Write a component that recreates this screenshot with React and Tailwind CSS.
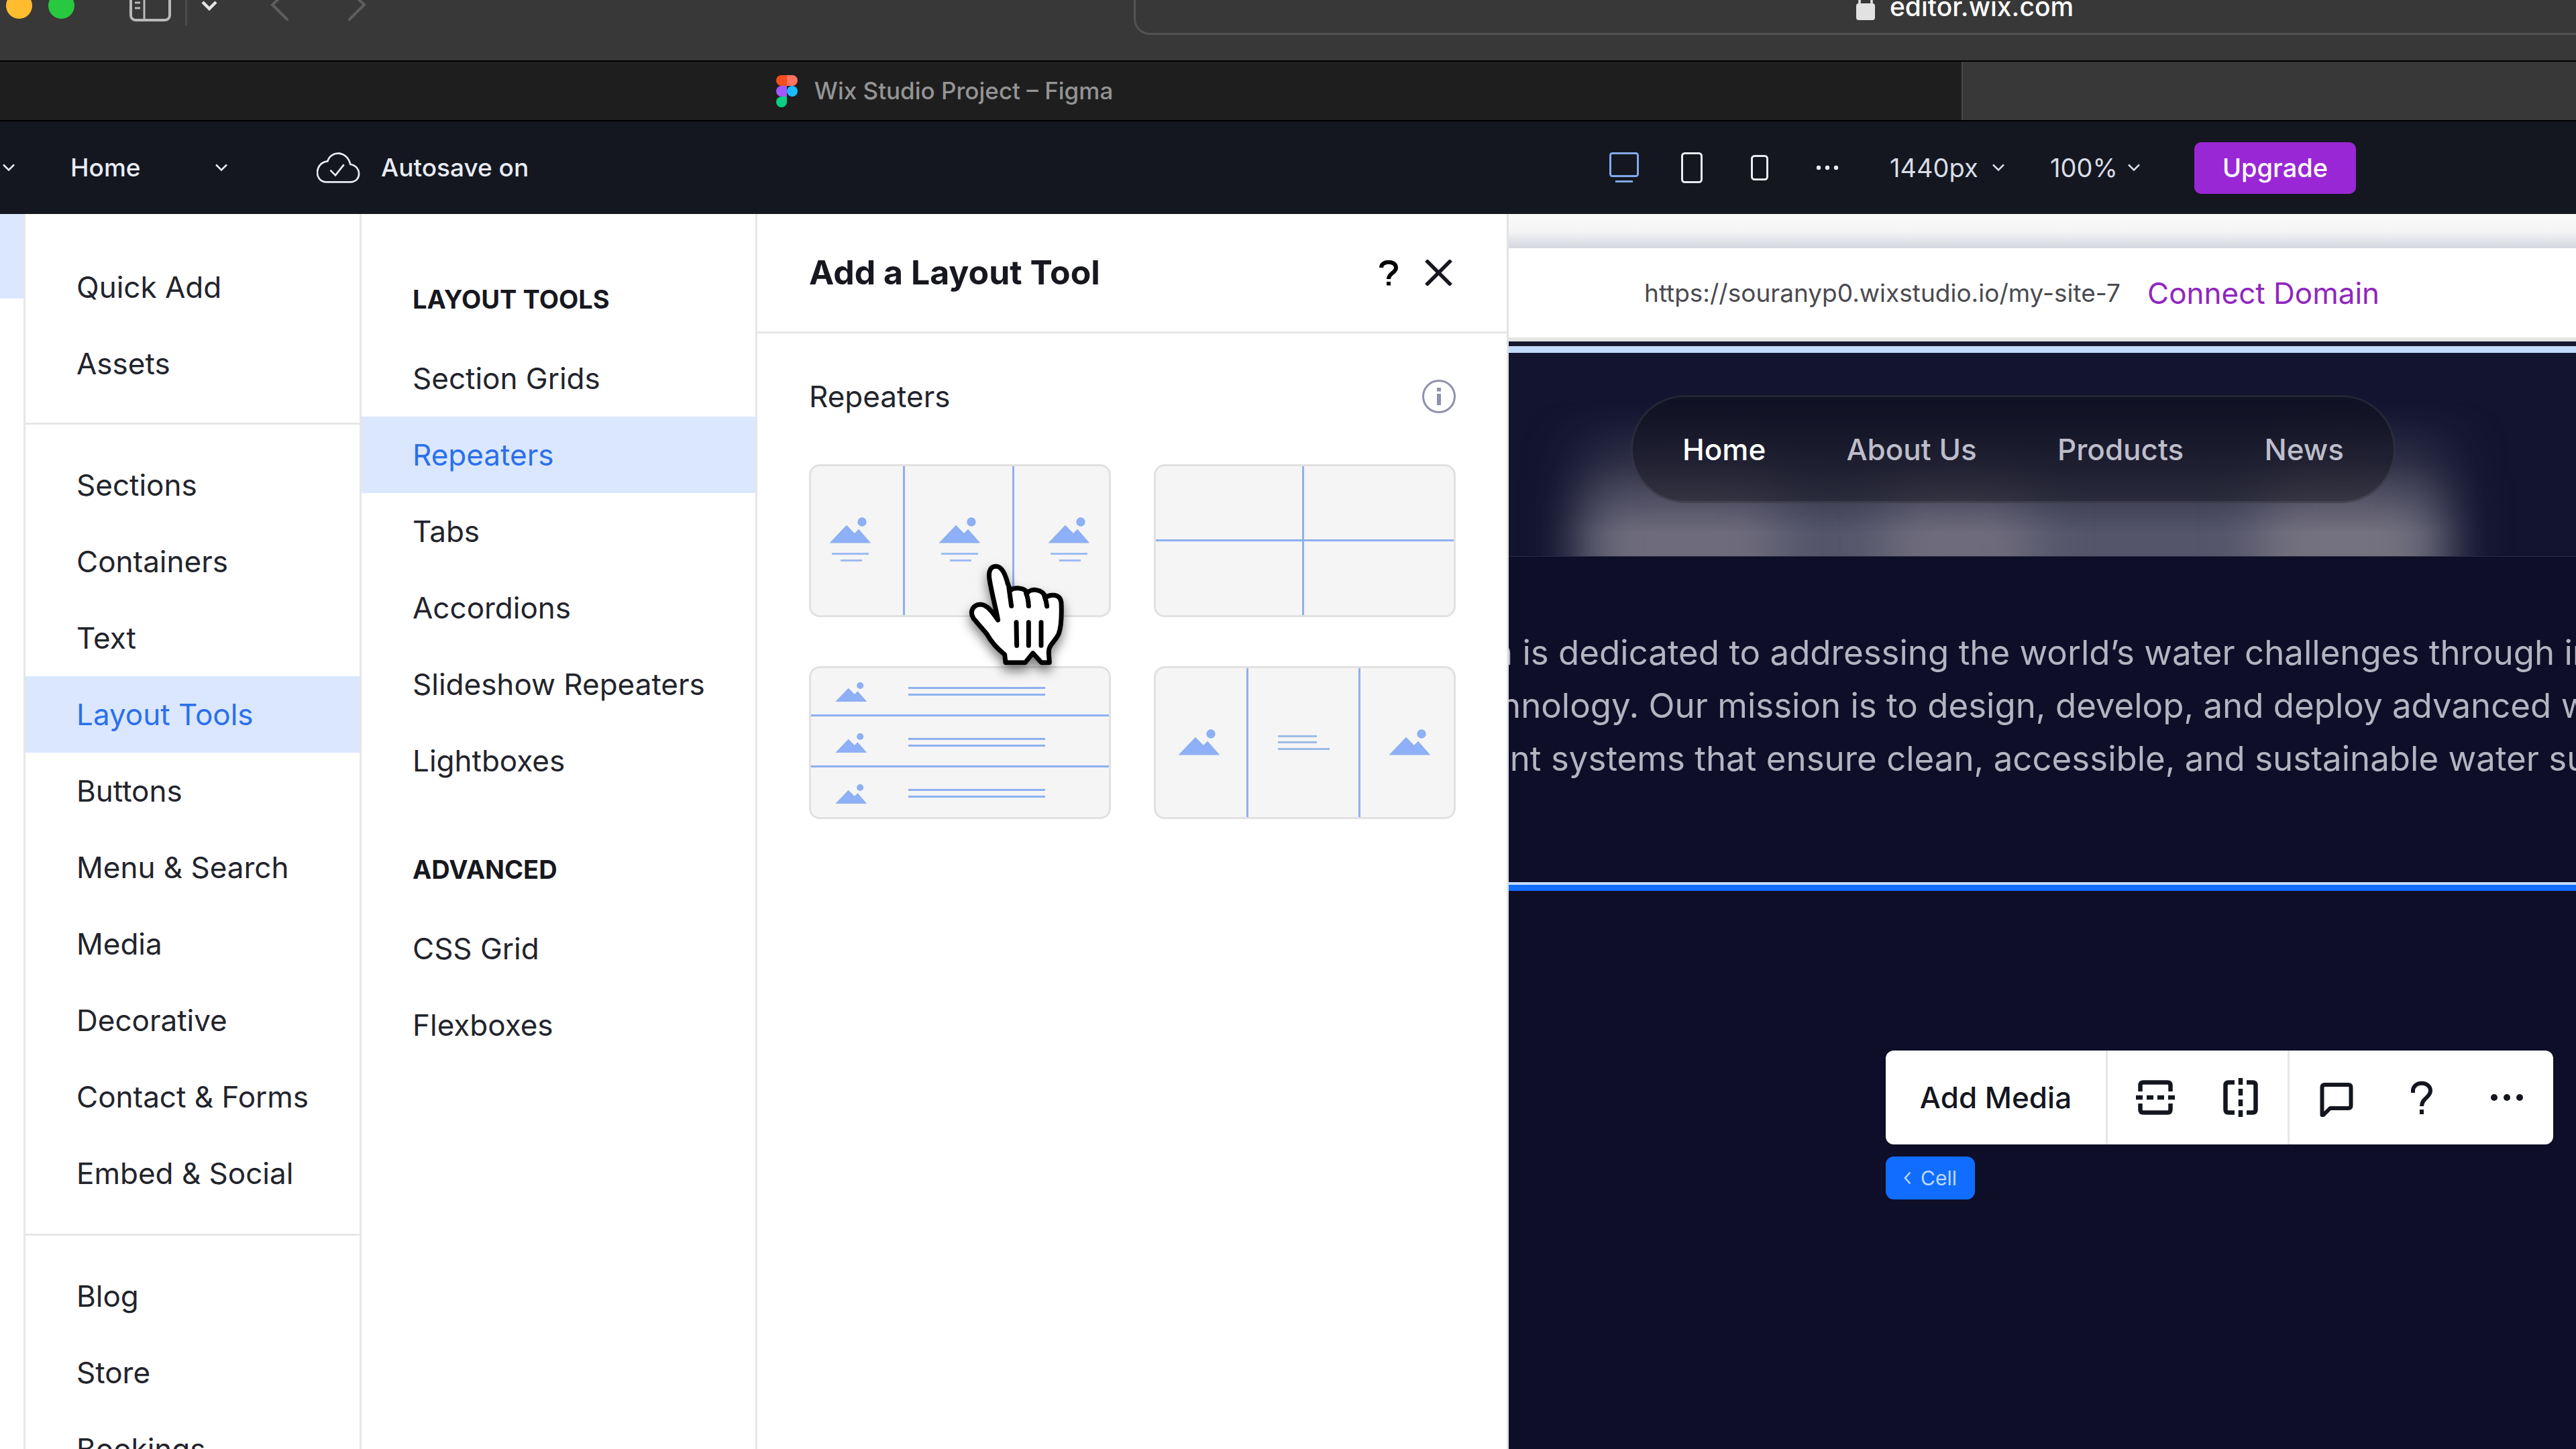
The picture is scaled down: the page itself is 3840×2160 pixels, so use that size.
import { useState } from "react";

const QUICK = ["Quick Add", "Assets"];
const ELEMENTS = [
  "Sections",
  "Containers",
  "Text",
  "Layout Tools",
  "Buttons",
  "Menu & Search",
  "Media",
  "Decorative",
  "Contact & Forms",
  "Embed & Social",
];
const APPS = ["Blog", "Store", "Bookings"];
const LAYOUT_TOOLS = [
  "Section Grids",
  "Repeaters",
  "Tabs",
  "Accordions",
  "Slideshow Repeaters",
  "Lightboxes",
];
const ADVANCED = ["CSS Grid", "Flexboxes"];

function Chevron({ className }) {
  return (
    <svg
      className={className || "w-5 h-3"}
      viewBox="0 0 20 12"
      fill="none"
      stroke="currentColor"
      strokeWidth="2.5"
    >
      <path d="M2 1.5l8 8 8-8" />
    </svg>
  );
}

/* Safari window chrome */
function BrowserBar() {
  return (
    <div className="h-[92px] shrink-0 overflow-hidden bg-[#383838] border-b-2 border-black">
      <div className="-mt-9 h-[88px] flex items-center pl-[9px]">
        <span className="w-[39px] h-[39px] rounded-full bg-[#febc2e]" />
        <span className="ml-6 w-[39px] h-[39px] rounded-full bg-[#28c840]" />
        <button className="ml-[82px] text-[#b9b9b9]" aria-label="Sidebar">
          <svg className="w-[62px] h-[48px]" viewBox="0 0 62 48" fill="none" stroke="currentColor" strokeWidth="4">
            <rect x="2" y="2" width="58" height="44" rx="7" />
            <path d="M22 2v44" strokeWidth="3" />
            <path d="M8 12h8M8 20h8M8 28h8" strokeWidth="3" />
          </svg>
        </button>
        <span className="ml-[21px] w-[3px] h-[60px] bg-[#4b4b4b]" />
        <button className="ml-[21px] text-[#e6e6e6]" aria-label="Tab groups">
          <svg className="w-6 h-4" viewBox="0 0 24 16" fill="none" stroke="currentColor" strokeWidth="4.5">
            <path d="M2 3l10 10L22 3" />
          </svg>
        </button>
        <button className="ml-[79px] text-[#5e5e5e]" aria-label="Back">
          <svg className="w-[28px] h-[46px]" viewBox="0 0 28 46" fill="none" stroke="currentColor" strokeWidth="4" strokeLinecap="round">
            <path d="M25 2L3 22l22 22" />
          </svg>
        </button>
        <button className="ml-[87px] text-[#5e5e5e]" aria-label="Forward">
          <svg className="w-[28px] h-[46px]" viewBox="0 0 28 46" fill="none" stroke="currentColor" strokeWidth="4" strokeLinecap="round">
            <path d="M3 2l22 20L3 44" />
          </svg>
        </button>
        <div className="ml-[1144px] -mr-[328px] flex-1 h-full pt-1 rounded-3xl border-3 border-[#535353] flex items-center justify-center gap-[22px]">
          <svg className="w-7 h-11" viewBox="0 0 28 44" fill="none">
            <rect y="17" width="28" height="25" rx="4" fill="#e2e2e2" />
            <path d="M5 19V9a9 9 0 0118 0v10" stroke="#e2e2e2" strokeWidth="3.5" />
          </svg>
          <span className="text-[39px] font-medium text-white">editor.wix.com</span>
        </div>
      </div>
    </div>
  );
}

function TabStrip() {
  return (
    <div className="h-[89px] shrink-0 flex bg-[#383838] border-b-2 border-black">
      <div className="w-[76.2%] flex items-center justify-center gap-[25px] pr-[108px] bg-[#1e1e1e] border-r-2 border-[#4a4a4a]">
        <svg className="w-8 h-12" viewBox="0 0 32 48">
          <path d="M8 0h8v16H8A8 8 0 018 0z" fill="#f24e1e" />
          <path d="M16 0h8a8 8 0 010 16h-8z" fill="#ff7262" />
          <path d="M8 16h8v16H8a8 8 0 010-16z" fill="#a259ff" />
          <circle cx="24" cy="24" r="8" fill="#1abcfe" />
          <path d="M8 32h8v8a8 8 0 11-8-8z" fill="#0acf83" />
        </svg>
        <span className="text-[35px] font-medium text-[#949494]">Wix Studio Project – Figma</span>
      </div>
    </div>
  );
}

function Picker({ label, value, className }) {
  return (
    <label className="flex items-center">
      <select
        aria-label={label}
        className={`appearance-none bg-transparent outline-none ${className}`}
        defaultValue={value}
      >
        <option>{value}</option>
      </select>
      <Chevron />
    </label>
  );
}

function AppBar() {
  return (
    <header className="h-[138px] shrink-0 flex items-center bg-[#14171f] text-[#e9ecf5] pl-[3px] pr-[328px]">
      <Chevron />
      <div className="ml-[82px]">
        <Picker label="Page" value="Home" className="w-[215px] text-[37px] font-medium" />
      </div>
      <div className="ml-[132px] flex items-center gap-[31px]">
        <svg className="w-[65px] h-[46px]" viewBox="36 48 195 138" fill="none" stroke="currentColor" strokeWidth="8">
          <path d="M80 181C25 181 24 95 85 88c14-48 86-50 102 14 52 8 50 79 0 79z" />
          <path d="M97 128l23 23 38-48" />
        </svg>
        <span className="text-[37px] font-medium">Autosave on</span>
      </div>

      <div className="ml-auto flex items-center">
        <button className="w-[101px] flex justify-center text-[#82a9ee]" aria-label="Desktop">
          <svg className="w-[44px] h-[46px]" viewBox="0 0 44 46" fill="none" stroke="currentColor" strokeWidth="3">
            <rect x="1.5" y="1.5" width="41" height="34" rx="3" />
            <path d="M9 43.5h26" />
          </svg>
        </button>
        <button className="w-[101px] flex justify-center" aria-label="Tablet">
          <svg className="w-8 h-[46px]" viewBox="0 0 32 46" fill="none" stroke="currentColor" strokeWidth="3">
            <rect x="1.5" y="1.5" width="29" height="43" rx="4" />
          </svg>
        </button>
        <button className="w-[101px] flex justify-center" aria-label="Mobile">
          <svg className="w-[26px] h-[38px]" viewBox="0 0 26 38" fill="none" stroke="currentColor" strokeWidth="3">
            <rect x="1.5" y="1.5" width="23" height="35" rx="4" />
          </svg>
        </button>
        <button className="w-[101px] flex justify-center" aria-label="More">
          <svg className="w-[34px] h-2" viewBox="0 0 34 8" fill="currentColor">
            <circle cx="4" cy="4" r="3.2" />
            <circle cx="17" cy="4" r="3.2" />
            <circle cx="30" cy="4" r="3.2" />
          </svg>
        </button>
        <div className="ml-[43px] flex items-center gap-[67px] text-[#d9dde8]">
          <Picker label="Canvas width" value="1440px" className="w-[152px] text-[38px]" />
          <Picker label="Zoom" value="100%" className="w-[115px] text-[38px]" />
        </div>
        <button className="ml-20 w-[241px] h-[77px] rounded-[10px] bg-[#9a27d5] text-white text-[38px] font-medium">
          Upgrade
        </button>
      </div>
    </header>
  );
}

function MenuItems({ items, active, onPick }) {
  return items.map((name) => (
    <button
      key={name}
      onClick={() => onPick(name)}
      className={`h-[114px] w-full shrink-0 pl-[76px] text-left text-[44px] whitespace-nowrap ${
        name === active ? "bg-[#dae7ff] text-[#2b70ea]" : "text-[#22242c]"
      }`}
    >
      {name}
    </button>
  ));
}

/* small picture placeholder, 55 wide */
function Mountain({ x, y, scale = 1 }) {
  return (
    <g transform={`translate(${x} ${y}) scale(${scale})`} fill="#8eb0f9">
      <path d="M0 30L22 7l12 12 6-6 15 17z" />
      <circle cx="45" cy="0" r="5.2" />
    </g>
  );
}

function Card({ label, children }) {
  return (
    <button
      aria-label={label}
      className="block w-full h-[228px] rounded-2xl border-3 border-[#e1e1e2] bg-[#f5f5f5] overflow-hidden"
    >
      <svg className="w-full h-full" viewBox="3 3 444 222" fill="none" stroke="#8eb0f0" strokeWidth="3">
        {children}
      </svg>
    </button>
  );
}

function HandCursor() {
  return (
    <svg
      className="absolute left-[224px] top-[138px] z-10 w-[180px] h-[180px] pointer-events-none drop-shadow-[0_9px_8px_rgba(0,0,0,0.5)]"
      viewBox="0 0 540 540"
      fill="#fff"
      stroke="#000"
      strokeWidth="21"
      strokeLinecap="round"
      strokeLinejoin="round"
    >
      <path d="M173 283C164 230 146 170 135 100c-6-38 6-56 28-57 26-1 42 32 53 75l12 32c18-14 64-14 76 12 16-22 68-20 82 20 18-14 64-20 70 22 2 50 2 106-12 142-18 38-46 46-44 84l3 43h-36l-38-42-34 42h-88l-4-36c-28-22-58-52-80-92L63 275c-18-30-2-60 30-62 28 0 50 26 80 70z" />
      <path d="M222 140l11 80M299 165c8 16 10 36 11 55M381 178c6 14 9 28 11 43" fill="none" />
      <path d="M255 293l2 104M310 293v104M366 293v104" fill="none" />
    </svg>
  );
}

function RepeatersPanel() {
  return (
    <section className="w-[1120px] shrink-0 bg-white border-r-3 border-[#e3e3e6]">
      <div className="h-[178px] flex items-center pl-[77px] pr-20 border-b-3 border-[#e6e6e6] text-[#17181f]">
        <h2 className="text-[50px] font-bold">Add a Layout Tool</h2>
        <button className="ml-auto" aria-label="Help">
          <svg className="w-7 h-[38px]" viewBox="0 0 28 38" fill="none" stroke="#000" strokeWidth="6">
            <path d="M3 11c0-11 22-11 22 0 0 8-11 8-11 17" />
            <path d="M14 32v5.500" />
          </svg>
        </button>
        <button className="ml-[39px]" aria-label="Close">
          <svg className="w-[43px] h-[39px]" viewBox="0 0 43 39" fill="none" stroke="currentColor" strokeWidth="5.5">
            <path d="M3 1l37 37M40 1L3 38" />
          </svg>
        </button>
      </div>

      <div className="pt-[66px] pl-[77px] pr-[76px]">
        <div className="h-14 flex items-center justify-between">
          <h3 className="text-[44px] text-[#22242c]">Repeaters</h3>
          <button className="text-[#8f91ac]" aria-label="Info">
            <svg className="w-[50px] h-[50px]" viewBox="0 0 50 50" fill="none" stroke="currentColor">
              <circle cx="25" cy="25" r="23.5" strokeWidth="3" />
              <path d="M25 12v5.500M25 21v17" strokeWidth="6" />
            </svg>
          </button>
        </div>

        <div className="mt-[73px] grid grid-cols-2 gap-x-16 gap-y-[73px]">
          <div className="relative">
            <Card label="Three columns">
              <path d="M141.500 0v228M304.500 0v228" />
              {[34, 197, 360].map((x) => (
                <g key={x}>
                  <Mountain x={x} y={86} />
                  <path d={`M${x} 133.500h55M${x + 13} 143.500h32`} stroke="#a0baf3" />
                </g>
              ))}
            </Card>
            <HandCursor />
          </div>
          <Card label="Two by two">
            <path d="M222.500 0v228M0 113.500h450" />
          </Card>
          <Card label="List">
            <path d="M0 73.500h450M0 149.500h450" />
            {[0, 76, 152].map((y) => (
              <g key={y}>
                <Mountain x={42} y={29 + y} scale={0.76} />
                <path d={`M148 ${32.5 + y}h204M148 ${42.5 + y}h204`} />
              </g>
            ))}
          </Card>
          <Card label="Mixed columns">
            <path d="M139.500 0v228M306.500 0v228" />
            <Mountain x={40} y={101} />
            <Mountain x={354} y={101} />
            <path d="M185 104.500h58M185 113.500h58M185 123.500h77" stroke="#9dbbe8" />
          </Card>
        </div>
      </div>
    </section>
  );
}

function Hero() {
  return (
    <div className="relative h-[304px] overflow-hidden bg-[#13142f] border-b border-[#2a2a42]">
      {/* glow behind the menu */}
      <div className="absolute inset-x-0 top-[70px] bottom-0 overflow-hidden mask-[linear-gradient(to_bottom,transparent,rgba(0,0,0,0.35)_40%,black_85%)]">
        <div className="absolute left-[110px] top-0 w-[1290px] h-[400px] bg-[#54556a] blur-[42px]" />
        <div className="absolute left-[130px] top-[60px] w-[270px] h-[320px] rounded-[80px] bg-[#6e6c7c] blur-[40px]" />
        <div className="absolute left-[560px] top-[90px] w-[220px] h-[300px] rounded-[80px] bg-[#6e6c7c] blur-[40px]" />
        <div className="absolute left-[1120px] top-[60px] w-[250px] h-[320px] rounded-[80px] bg-[#747280] blur-[40px]" />
      </div>
      <nav className="relative ml-[182px] mt-[63px] w-[1140px] h-[161px] rounded-full border-3 border-white/8 bg-[#0f1018]/45 flex items-center justify-between px-[74px] text-[44px] font-medium text-[#bdbdca]">
        <a href="#home" className="text-white">Home</a>
        <a href="#about">About Us</a>
        <a href="#products">Products</a>
        <a href="#news">News</a>
      </nav>
    </div>
  );
}

function CellToolbar() {
  return (
    <div className="mt-[238px] ml-[562px]">
      <div className="inline-flex h-[140px] rounded-xl bg-white text-[#14161f] divide-x-3 divide-[#e6e6e6]">
        <button className="w-[331px] text-[44px] font-medium">Add Media</button>
        <div className="flex px-[7px]">
          <button className="w-[127px] flex items-center justify-center" aria-label="Split rows">
            <svg className="w-[58px] h-[58px]" viewBox="0 0 58 58" fill="none" stroke="currentColor" strokeWidth="6.500">
              <path d="M6.500 20V11q0-4.500 4.500-4.500h36q4.500 0 4.500 4.500v9M6.500 38v9q0 4.500 4.500 4.500h36q4.500 0 4.500-4.500v-9" />
              <path d="M0 29h10M16 29h10M32 29h10M48 29h10" />
            </svg>
          </button>
          <button className="w-[127px] flex items-center justify-center" aria-label="Split columns">
            <svg className="w-[58px] h-[58px]" viewBox="0 0 58 58" fill="none" stroke="currentColor" strokeWidth="6.500">
              <path d="M20 6.500H11q-4.500 0-4.500 4.500v36q0 4.500 4.500 4.500h9M38 6.500h9q4.500 0 4.500 4.500v36q0 4.500-4.500 4.500h-9" />
              <path d="M29 0v10M29 16v10M29 32v10M29 48v10" />
            </svg>
          </button>
        </div>
        <div className="flex px-[6px]">
          <button className="w-[127px] flex items-center justify-center" aria-label="Comment">
            <svg className="w-[50px] h-[58px]" viewBox="0 0 50 58" fill="none" stroke="currentColor" strokeWidth="6" strokeLinejoin="round">
              <path d="M3.500 55V14q0-4 4-4h35q4 0 4 4v27q0 4-4 4h-27l-10 10z" />
            </svg>
          </button>
          <button className="w-[127px] flex items-center justify-center" aria-label="Help">
            <svg className="w-[34px] h-[50px]" viewBox="0 0 34 50" fill="none" stroke="currentColor" strokeWidth="6">
              <path d="M4 18V15c0-15 26-15 26 0 0 10-13 11-13 23" />
              <path d="M17 43v7" />
            </svg>
          </button>
          <button className="w-[127px] flex items-center justify-center" aria-label="More actions">
            <svg className="w-[50px] h-3" viewBox="0 0 50 12" fill="currentColor">
              <circle cx="6" cy="6" r="5" />
              <circle cx="25" cy="6" r="5" />
              <circle cx="44" cy="6" r="5" />
            </svg>
          </button>
        </div>
      </div>
      <button className="mt-[18px] w-[133px] h-16 rounded-xl bg-[#116dff] text-[#bdd9ff] text-[30px] flex items-center justify-center gap-[14px]">
        <svg className="w-[11px] h-5" viewBox="0 0 11 20" fill="none" stroke="currentColor" strokeWidth="2.500">
          <path d="M9.500 1.500L2 10l7.500 8.500" />
        </svg>
        Cell
      </button>
    </div>
  );
}

function Canvas() {
  return (
    <main className="flex-1 min-w-0 overflow-hidden bg-[#0e0e28]">
      <div className="h-[51px] bg-linear-to-b from-[#fafafa] via-[#f5f5f6] to-[#d4d6de]" />
      <div className="h-[133px] flex items-center gap-[32px] pl-[202px] bg-white">
        <span className="w-[718px] whitespace-nowrap text-[37px] text-[#4a4a4f]">
          https://souranyp0.wixstudio.io/my-site-7
        </span>
        <a href="#domain" className="text-[44px] text-[#9026bd]">Connect Domain</a>
      </div>
      <div className="h-[6px] bg-[#e4e4e4]" />
      <div className="h-[7px] bg-[#15182f]" />
      <div className="h-[10px] bg-[#c3dafd]" />
      <Hero />
      <div className="pt-[103px] pb-[145px] text-[51px] leading-[79px] text-[#b4b4c2] whitespace-nowrap">
        <p className="-ml-6">n is dedicated to addressing the world’s water challenges through innovative</p>
        <p className="-ml-3">hnology. Our mission is to design, develop, and deploy advanced water</p>
        <p className="-ml-7">ent systems that ensure clean, accessible, and sustainable water supplies</p>
      </div>
      <div className="h-[13px] border-t-4 border-[#c3dafd] bg-[#116dff]" />
      <CellToolbar />
    </main>
  );
}

export default function App() {
  const [category, setCategory] = useState("Layout Tools");
  const [tool, setTool] = useState("Repeaters");

  return (
    <div className="h-screen w-full flex flex-col overflow-hidden bg-white font-[Inter,sans-serif]">
      <BrowserBar />
      <TabStrip />
      <AppBar />
      <div className="flex-1 min-h-0 flex">
        {/* Left rail */}
        <div className="w-[38px] shrink-0 border-r-3 border-[#e6e6e6]">
          <div className="h-[126px] bg-[#dae7ff]" />
        </div>

        <nav className="w-[501px] shrink-0 overflow-hidden border-r-3 border-[#e6e6e6]">
          <div className="pt-[52px] pb-[31px] border-b-3 border-[#e6e6e6]">
            <MenuItems items={QUICK} active={category} onPick={setCategory} />
          </div>
          <div className="py-[33px] border-b-3 border-[#e6e6e6]">
            <MenuItems items={ELEMENTS} active={category} onPick={setCategory} />
          </div>
          <div className="pt-[33px]">
            <MenuItems items={APPS} active={category} onPick={setCategory} />
          </div>
        </nav>

        <nav className="w-[590px] shrink-0 overflow-hidden border-r-3 border-[#e6e6e6]">
          <h2 className="pt-[99px] pb-[33px] pl-[76px] text-[38px] leading-14 font-bold text-[#17181f]">
            LAYOUT TOOLS
          </h2>
          <MenuItems items={LAYOUT_TOOLS} active={tool} onPick={setTool} />
          <h2 className="pt-[77px] pb-[33px] pl-[76px] text-[38px] leading-14 font-bold text-[#17181f]">
            ADVANCED
          </h2>
          <MenuItems items={ADVANCED} active={tool} onPick={setTool} />
        </nav>

        <RepeatersPanel />
        <Canvas />
      </div>
    </div>
  );
}
